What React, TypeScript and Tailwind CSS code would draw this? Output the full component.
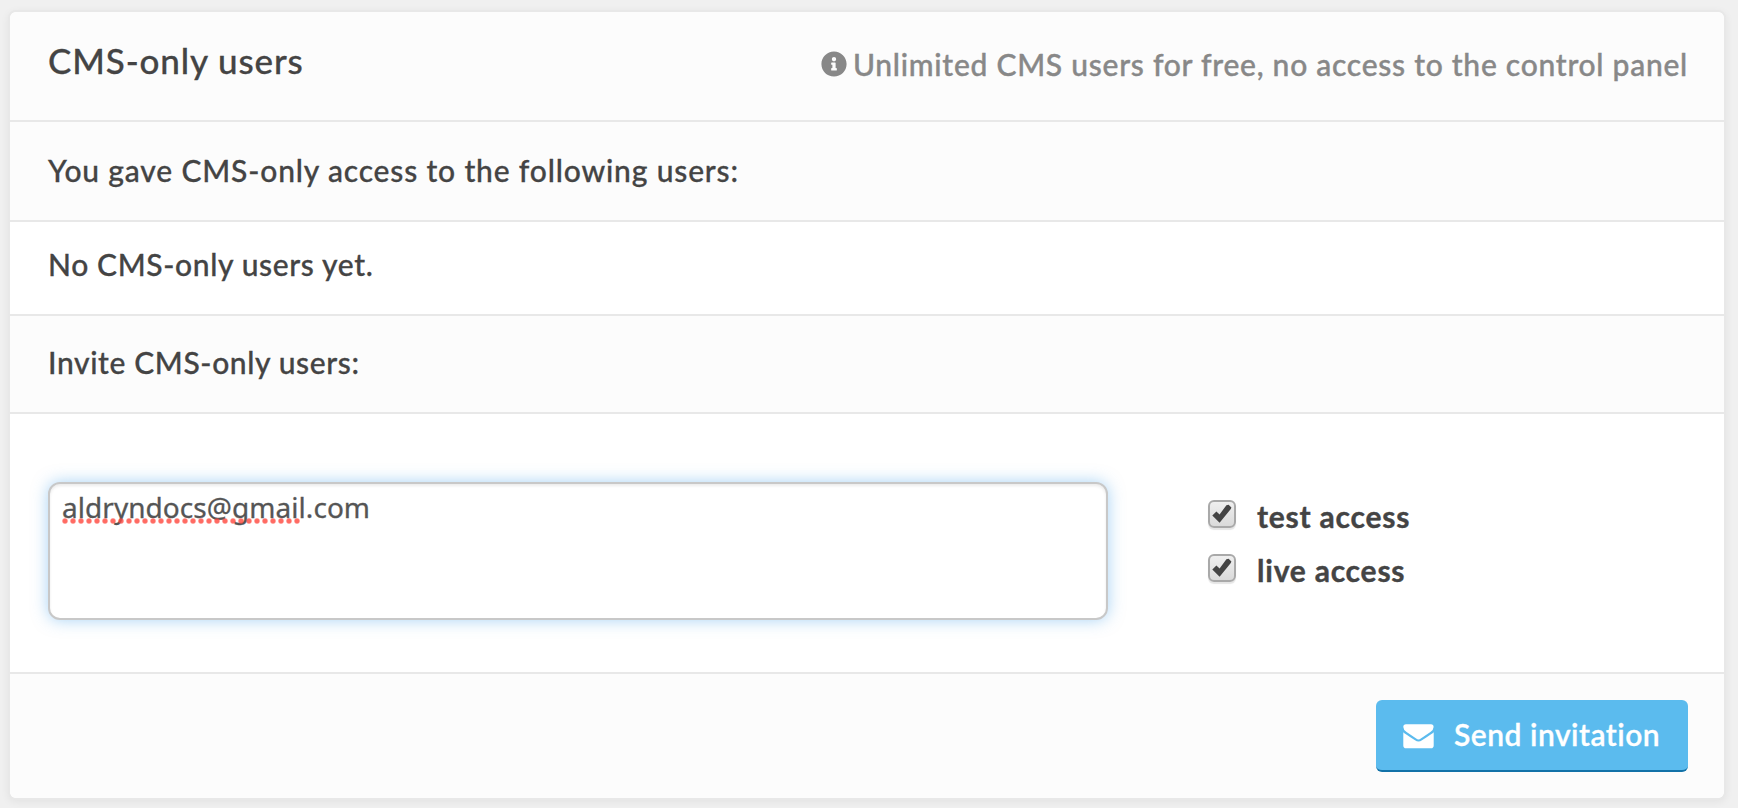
import React from "react";
import { FaInfoCircle } from "react-icons/fa";

function CheckItem({ label }: { label: string }) {
  return (
    <label className="flex h-[54px] items-start">
      <span className="relative mt-[3px] block h-[28px] w-[28px] rounded-[6px] border-2 border-[#a9a9a9] bg-linear-to-b from-[#efefef] to-[#dadada] shadow-[0_2px_1px_rgba(0,0,0,0.1)]">
        <svg viewBox="0 0 28 28" className="absolute -top-0.5 -left-0.5 h-[28px] w-[28px]" fill="#444">
          <path d="M4.3 15.6 8.4 11.6 11.6 14.4 18.4 5.2 20.6 4.8 23.4 7.6 22.8 9 11.6 22.8Z" />
        </svg>
      </span>
      <span className="-mt-px ml-[21px] whitespace-nowrap text-[30px] leading-[40px] font-bold tracking-[0.78px] text-[#444] [-webkit-text-stroke:0.4px_#444]">
        {label}
      </span>
    </label>
  );
}

export default function App() {
  return (
    <div className="h-[808px] w-[1738px] overflow-hidden bg-[#f0f0f0] px-2 pt-[10px] font-['Lato',sans-serif] font-medium text-[#444]">
      <section className="h-[790px] w-[1718px] overflow-hidden rounded-[8px] border-2 border-[#e8e8e8] bg-white bg-clip-padding shadow-[0_2px_8px_rgba(0,0,0,0.06)]">
        <header className="flex h-[110px] items-start justify-between border-b-2 border-[#e8e8e8] bg-[#fcfcfc] pr-[36px] pl-[38px]">
          <h1 className="mt-[26px] whitespace-nowrap text-[35px] leading-[44px] tracking-[0.88px] [-webkit-text-stroke:0.3px_#444]">CMS-only users</h1>
          <p className="mt-[32px] flex items-center whitespace-nowrap text-[30px] leading-[40px] text-[#888]">
            <FaInfoCircle className="mr-[6px] h-[26px] w-[26px]" />
            <span className="tracking-[0.74px] [-webkit-text-stroke:0.4px_#888]">Unlimited CMS users for free, no access to the control panel</span>
          </p>
        </header>
        <div className="h-[100px] border-b-2 border-[#e8e8e8] bg-[#fcfcfc] pt-[28px] pl-[38px] text-[30px] leading-[40px]">
          <span className="tracking-[0.84px] [-webkit-text-stroke:0.3px_#444]">You gave CMS-only access to the following users:</span>
        </div>
        <div className="h-[94px] border-b-2 border-[#e8e8e8] pt-[22px] pl-[38px] text-[30px] leading-[40px]">
          <span className="tracking-[0.64px] [-webkit-text-stroke:0.3px_#444]">No CMS-only users yet.</span>
        </div>
        <div className="h-[98px] border-b-2 border-[#e8e8e8] bg-[#fcfcfc] pt-[26px] pl-[38px] text-[30px] leading-[40px]">
          <span className="tracking-[0.62px] [-webkit-text-stroke:0.3px_#444]">Invite CMS-only users:</span>
        </div>
        <div className="flex h-[260px] items-start border-b-2 border-[#e8e8e8] pt-[68px] pl-[38px]">
          <div className="h-[138px] w-[1060px] rounded-[12px] border-2 border-[#c8c8c8] bg-white pt-[4px] pl-[12px] shadow-[0_0_16px_rgba(82,168,236,0.5),inset_0_2px_3px_rgba(0,0,0,0.08)]">
            <span className="relative inline-block whitespace-nowrap font-['Noto_Sans',sans-serif] text-[28px] leading-[38px] font-normal tracking-[0.05px] text-[#555] [-webkit-text-stroke:0.3px_#555]">
              aldryndocs@gmail.com
              <span className="absolute top-[30px] left-0 h-[6px] w-[239px] bg-[radial-gradient(circle_at_3px_3px,rgba(255,70,60,0.8)_2px,transparent_3.3px)] bg-[length:8px_6px]" />
            </span>
          </div>
          <div className="mt-[15px] ml-[100px]">
            <CheckItem label="test access" />
            <CheckItem label="live access" />
          </div>
        </div>
        <footer className="flex h-[124px] justify-end bg-[#fcfcfc] pt-[26px] pr-[36px]">
          <button className="flex h-[72px] w-[312px] items-start rounded-[6px] border-b-2 border-[#1272a8] bg-[#5bbbee] pt-[14px] pl-[27px] text-white">
            <svg viewBox="0 0 31 25" className="mt-[10px] h-[25px] w-[31px] shrink-0" fill="#fff">
              <path d="M3 0.3H28Q30.6.3 30.6 3 30.6 5.8 27.4 7.9L17.8 14.6Q15.5 16.3 13.2 14.6L3.6 7.9Q.3 5.8.3 3 .3.3 3 .3Z" />
              <path d="M.3 8.2Q1.2 9.2 12 16.3 15.5 18.7 19 16.3 29.8 9.2 30.7 8.2V21.4Q30.7 24.2 27.9 24.2H3.1Q.3 24.2.3 21.4Z" />
            </svg>
            <span className="ml-[20px] whitespace-nowrap text-[30px] leading-[40px] font-semibold tracking-[0.5px] [-webkit-text-stroke:0.3px_#fff]">Send invitation</span>
          </button>
        </footer>
      </section>
    </div>
  );
}
